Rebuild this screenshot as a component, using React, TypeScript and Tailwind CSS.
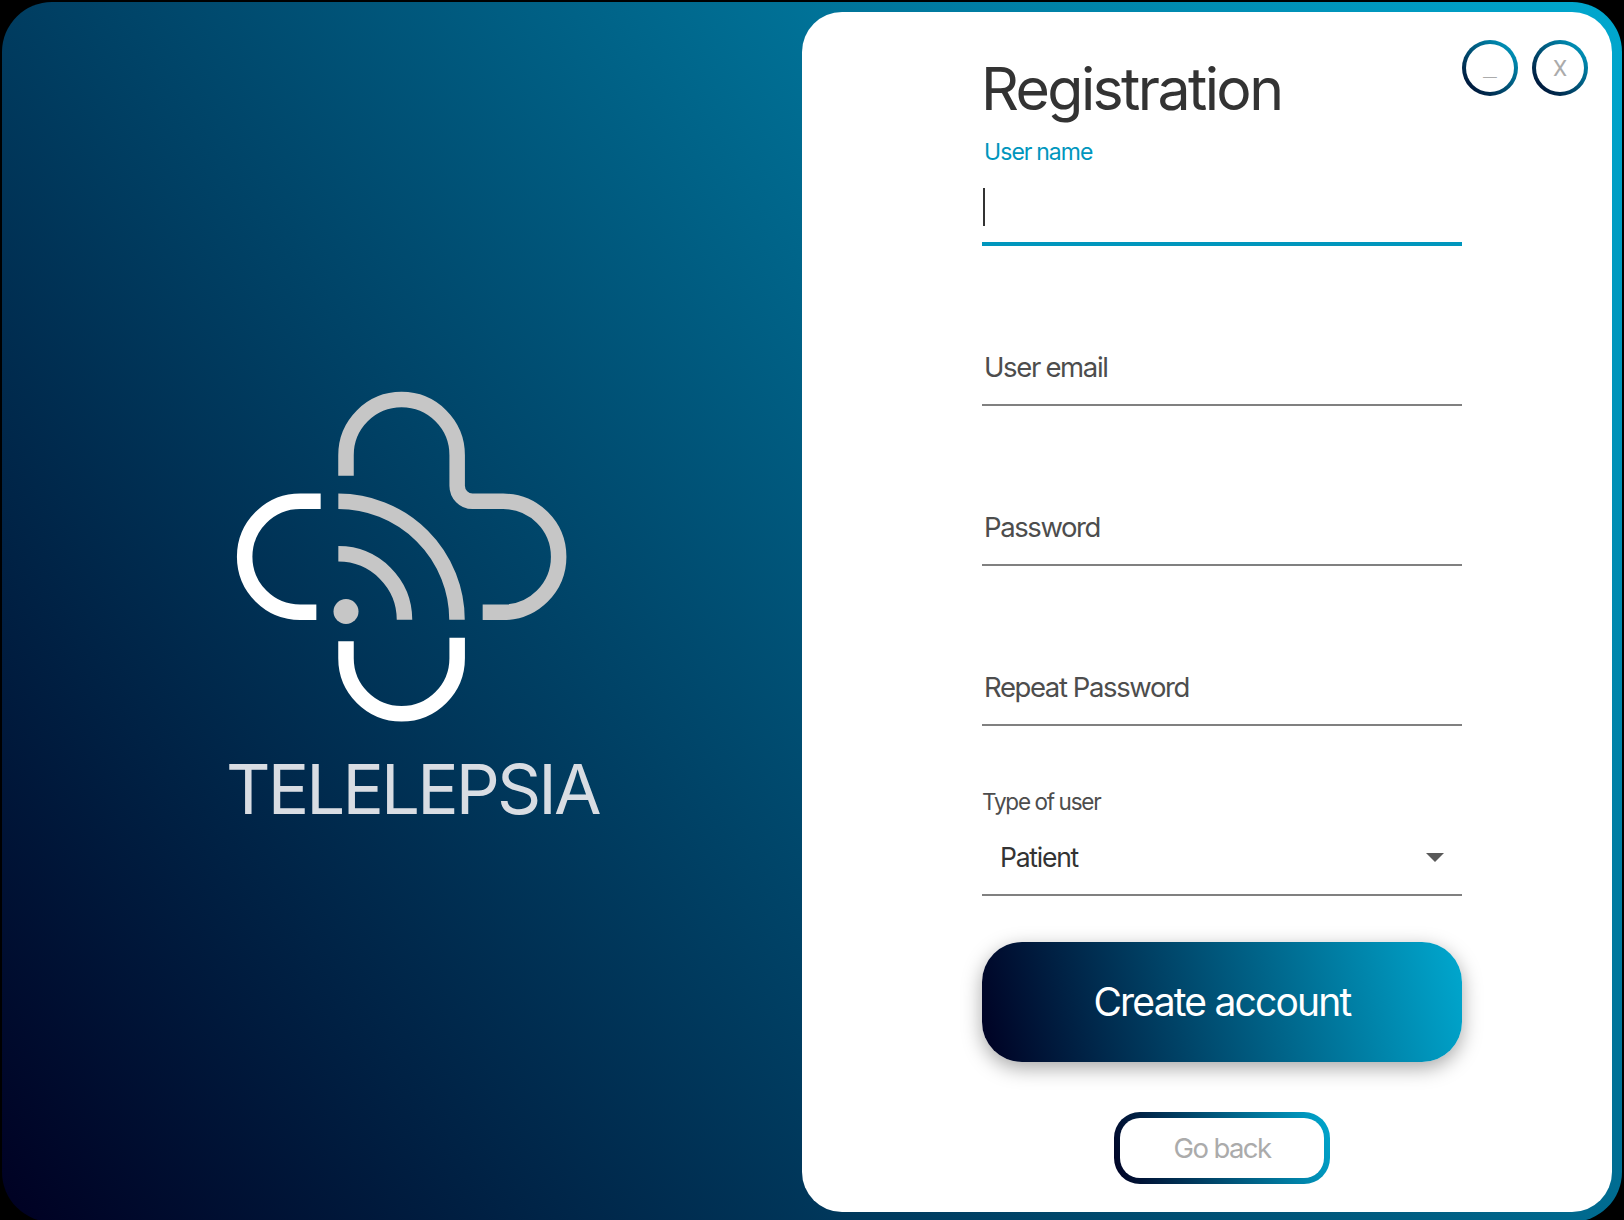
import type { ReactNode } from 'react';

function Logo() {
  return (
    <svg viewBox="0 0 1080 1080" className="ml-[218px] mt-[378px] size-[360px] shrink-0" fill="none" strokeWidth="46.5">
      <g stroke="#c6c6c6">
        <path d="M378 287.5V225.5A166.5 166.5 0 0 1 711.5 225.5V317A46 47 0 0 0 757.5 364H849.5A166.5 166.5 0 0 1 849.5 697H788" />
        <path d="M355 364A356 355.5 0 0 1 711 719" />
        <path d="M355 521.5A198.5 198 0 0 1 553.5 719.5" />
      </g>
      <circle cx="378" cy="694.5" r="37.5" fill="#c6c6c6" />
      <g stroke="#ffffff">
        <path d="M302 364H240.5A166.5 166.5 0 0 0 240.5 697H289" />
        <path d="M378 784V834.5A166.5 166.5 0 0 0 711.5 834.5V773" />
      </g>
    </svg>
  );
}

function WindowButton({ children }: { children: ReactNode }) {
  return (
    <button className="size-14 rounded-full bg-[linear-gradient(45deg,#000022,#00a8cf)] p-1">
      <span className="flex size-full items-center justify-center rounded-full bg-white text-[#ababab]">{children}</span>
    </button>
  );
}

function Field({ children }: { children: ReactNode }) {
  return (
    <div className="flex h-40 flex-col justify-end border-b-2 border-[#808080] pb-[23px] pl-[2px] text-[27.5px] leading-7 text-[#4d4d4d]">
      {children}
    </div>
  );
}

export default function App() {
  return (
    <div className="h-[1220px] w-[1624px] overflow-hidden bg-black px-[2px] pt-[2px] font-['Inter',sans-serif]">
      <div className="flex h-[1220px] w-[1620px] rounded-[50px] bg-[linear-gradient(53.02deg,#000022,#00a8cf)]">
        <section className="flex w-[800px] flex-col">
          <Logo />
          <p className="ml-[224px] mt-[13px] text-[69px] leading-[72px] tracking-[-2.87px] text-[#d9dde3]">TELELEPSIA</p>
        </section>

        <main className="mt-[10px] flex h-[1200px] w-[810px] items-start rounded-[40px] bg-white">
          <form className="ml-[180px] flex w-[480px] flex-col pt-[47px]">
            <h1 className="-ml-px text-[59px] leading-[60px] tracking-[-2.6px] text-[#333333]">Registration</h1>

            <div className="mt-[21px] flex flex-col border-b-4 border-[#0096bd] pb-4">
              <label className="pl-[2px] text-[23px] leading-6 tracking-[-0.93px] text-[#0096bd] [word-spacing:-1px]">User name</label>
              <span className="ml-px mt-6 h-[38px] w-[2px] bg-[#333333]" />
            </div>

            <Field><span className="tracking-[-1.34px] [word-spacing:-1px]">User email</span></Field>
            <Field><span className="tracking-[-1.41px]">Password</span></Field>
            <Field><span className="tracking-[-1.4px]">Repeat Password</span></Field>

            <label className="mt-[64px] text-[22.5px] leading-6 tracking-[-1.2px] text-[#4d4d4d] [word-spacing:-0.5px]">Type of user</label>
            <div className="flex items-center justify-between border-b-2 border-[#808080] pb-[23px] pl-[18px] pr-[18px] pt-[29px]">
              <span className="text-[26.5px] leading-7 tracking-[-1.23px] text-[#333333]">Patient</span>
              <svg viewBox="0 0 18 9" className="h-[9px] w-[18px]"><path d="M0 0H18L9 9Z" fill="#595959" /></svg>
            </div>

            <button type="button" className="mt-[46px] h-[120px] rounded-[40px] bg-[linear-gradient(75.96deg,#000022,#00a8cf)] text-[39px] leading-[48px] tracking-[-1.8px] text-white shadow-[0_6px_20px_rgba(0,0,0,0.35)]">
              Create account
            </button>
            <button type="button" className="mx-auto mt-[50px] h-[72px] w-[216px] rounded-[26px] bg-[linear-gradient(71.57deg,#000022,#00a8cf)] p-[6px]">
              <span className="flex size-full items-center justify-center rounded-[20px] bg-white text-[27.5px] leading-8 tracking-[-1.58px] text-[#ababab]">Go back</span>
            </button>
          </form>

          <div className="mt-7 flex gap-[14px]">
            <WindowButton><span className="pb-[2px] font-['Liberation_Sans',sans-serif] text-[24px] font-bold leading-6">_</span></WindowButton>
            <WindowButton><span className="font-['Roboto',sans-serif] text-[22.5px] leading-6">X</span></WindowButton>
          </div>
        </main>
      </div>
    </div>
  );
}
